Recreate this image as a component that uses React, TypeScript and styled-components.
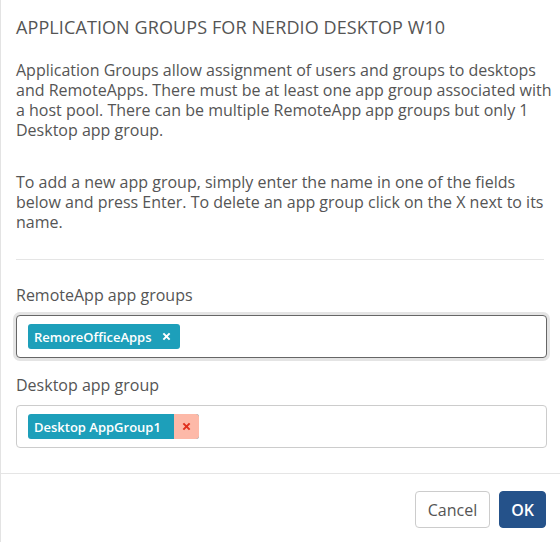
import React from "react";
import styled, { createGlobalStyle } from "styled-components";

const GlobalStyle = createGlobalStyle`
  html, body {
    margin: 0;
    padding: 0;
    background: #ffffff;
  }
  body {
    font-family: "Open Sans", "Noto Sans", Arial, sans-serif;
    color: #555555;
  }
  * { box-sizing: border-box; }
`;

const Modal = styled.div`
  width: 560px;
  height: 542px;
  display: flex;
  flex-direction: column;
  background: #ffffff;
  border-left: 1px solid #e3e3e3;
`;

const Header = styled.div`
  padding: 16px 15px 0;
`;

const Title = styled.h4`
  margin: 0;
  font-size: 18px;
  font-weight: 400;
  line-height: 22px;
  letter-spacing: 0.1px;
  color: #555555;
`;

/* the help text runs a little wider than the form controls below it */
const Body = styled.div`
  flex: 1;
  padding: 22px 6px 0 15px;
`;

const Text = styled.p<{ $gap?: number }>`
  margin: 0 0 ${(p) => p.$gap ?? 0}px;
  font-size: 16px;
  line-height: 20px;
  color: #555555;
`;

const Divider = styled.hr`
  border: 0;
  border-top: 1px solid #e5e5e5;
  margin: 27px 10px 25px 0;
`;

const Field = styled.div`
  display: flex;
  flex-direction: column;
  gap: 10px;
  margin: 0 7px 17px 0;
`;

const Label = styled.label`
  font-size: 16px;
  line-height: 20px;
  color: #555555;
`;

const TagInput = styled.div<{ $focused?: boolean }>`
  height: 43px;
  display: flex;
  align-items: center;
  padding: 0 11px;
  border: 1px solid ${(p) => (p.$focused ? "#666666" : "#cccccc")};
  border-radius: 4px;
  background: #ffffff;
  box-shadow: ${(p) => (p.$focused ? "0 0 0 3px #e4e4e4" : "none")};
`;

const Tag = styled.span`
  display: inline-flex;
  align-items: stretch;
  height: 25px;
  border-radius: 3px;
  overflow: hidden;
  background: #1d9fba;
  color: #ffffff;
  font-size: 13px;
  font-weight: 600;
`;

const TagLabel = styled.span<{ $padRight: number }>`
  display: flex;
  align-items: center;
  padding: 0 ${(p) => p.$padRight}px 0 6px;
`;

const TagRemove = styled.span<{ $hover?: boolean }>`
  display: flex;
  align-items: center;
  justify-content: center;
  width: ${(p) => (p.$hover ? 25 : 21)}px;
  padding-right: ${(p) => (p.$hover ? 0 : 6)}px;
  background: ${(p) => (p.$hover ? "#fdb9a8" : "transparent")};
  color: ${(p) => (p.$hover ? "#e0301e" : "#ffffff")};
  cursor: pointer;
`;

const Footer = styled.div`
  border-top: 1px solid #e5e5e5;
  height: 69px;
  display: flex;
  justify-content: flex-end;
  align-items: flex-start;
  gap: 9px;
  padding: 17px 14px 0;
`;

const Button = styled.button<{ $primary?: boolean }>`
  height: 37px;
  padding: 0 ${(p) => (p.$primary ? 11 : 12)}px;
  border-radius: 4px;
  font-family: "Open Sans", "Noto Sans", Arial, sans-serif;
  font-size: 16px;
  line-height: 20px;
  cursor: pointer;
  border: 1px solid ${(p) => (p.$primary ? "#25528a" : "#cccccc")};
  background: ${(p) => (p.$primary ? "#25528a" : "#ffffff")};
  color: ${(p) => (p.$primary ? "#ffffff" : "#555555")};
  font-weight: ${(p) => (p.$primary ? 600 : 400)};
`;

function Cross({ size = 9 }: { size?: number }) {
  return (
    <svg width={size} height={size} viewBox="0 0 10 10" aria-hidden="true">
      <path
        d="M1.5 1.5 L8.5 8.5 M8.5 1.5 L1.5 8.5"
        stroke="currentColor"
        strokeWidth="2.2"
        strokeLinecap="butt"
      />
    </svg>
  );
}

export default function App() {
  return (
    <>
      <GlobalStyle />
      <Modal>
        <Header>
          <Title>APPLICATION GROUPS FOR NERDIO DESKTOP W10</Title>
        </Header>
        <Body>
          <Text $gap={32}>
            Application Groups allow assignment of users and groups to desktops
            and RemoteApps. There must be at least one app group associated with
            a host pool. There can be multiple RemoteApp app groups but only 1
            Desktop app group.
          </Text>
          <Text>
            To add a new app group, simply enter the name in one of the fields
            below and press Enter. To delete an app group click on the X next to
            its name.
          </Text>
          <Divider />
          <Field>
            <Label>RemoteApp app groups</Label>
            <TagInput $focused>
              <Tag>
                <TagLabel $padRight={7}>RemoreOfficeApps</TagLabel>
                <TagRemove>
                  <Cross size={9} />
                </TagRemove>
              </Tag>
            </TagInput>
          </Field>
          <Field>
            <Label>Desktop app group</Label>
            <TagInput>
              <Tag>
                <TagLabel $padRight={13}>Desktop AppGroup1</TagLabel>
                <TagRemove $hover>
                  <Cross size={9} />
                </TagRemove>
              </Tag>
            </TagInput>
          </Field>
        </Body>
        <Footer>
          <Button>Cancel</Button>
          <Button $primary>OK</Button>
        </Footer>
      </Modal>
    </>
  );
}
